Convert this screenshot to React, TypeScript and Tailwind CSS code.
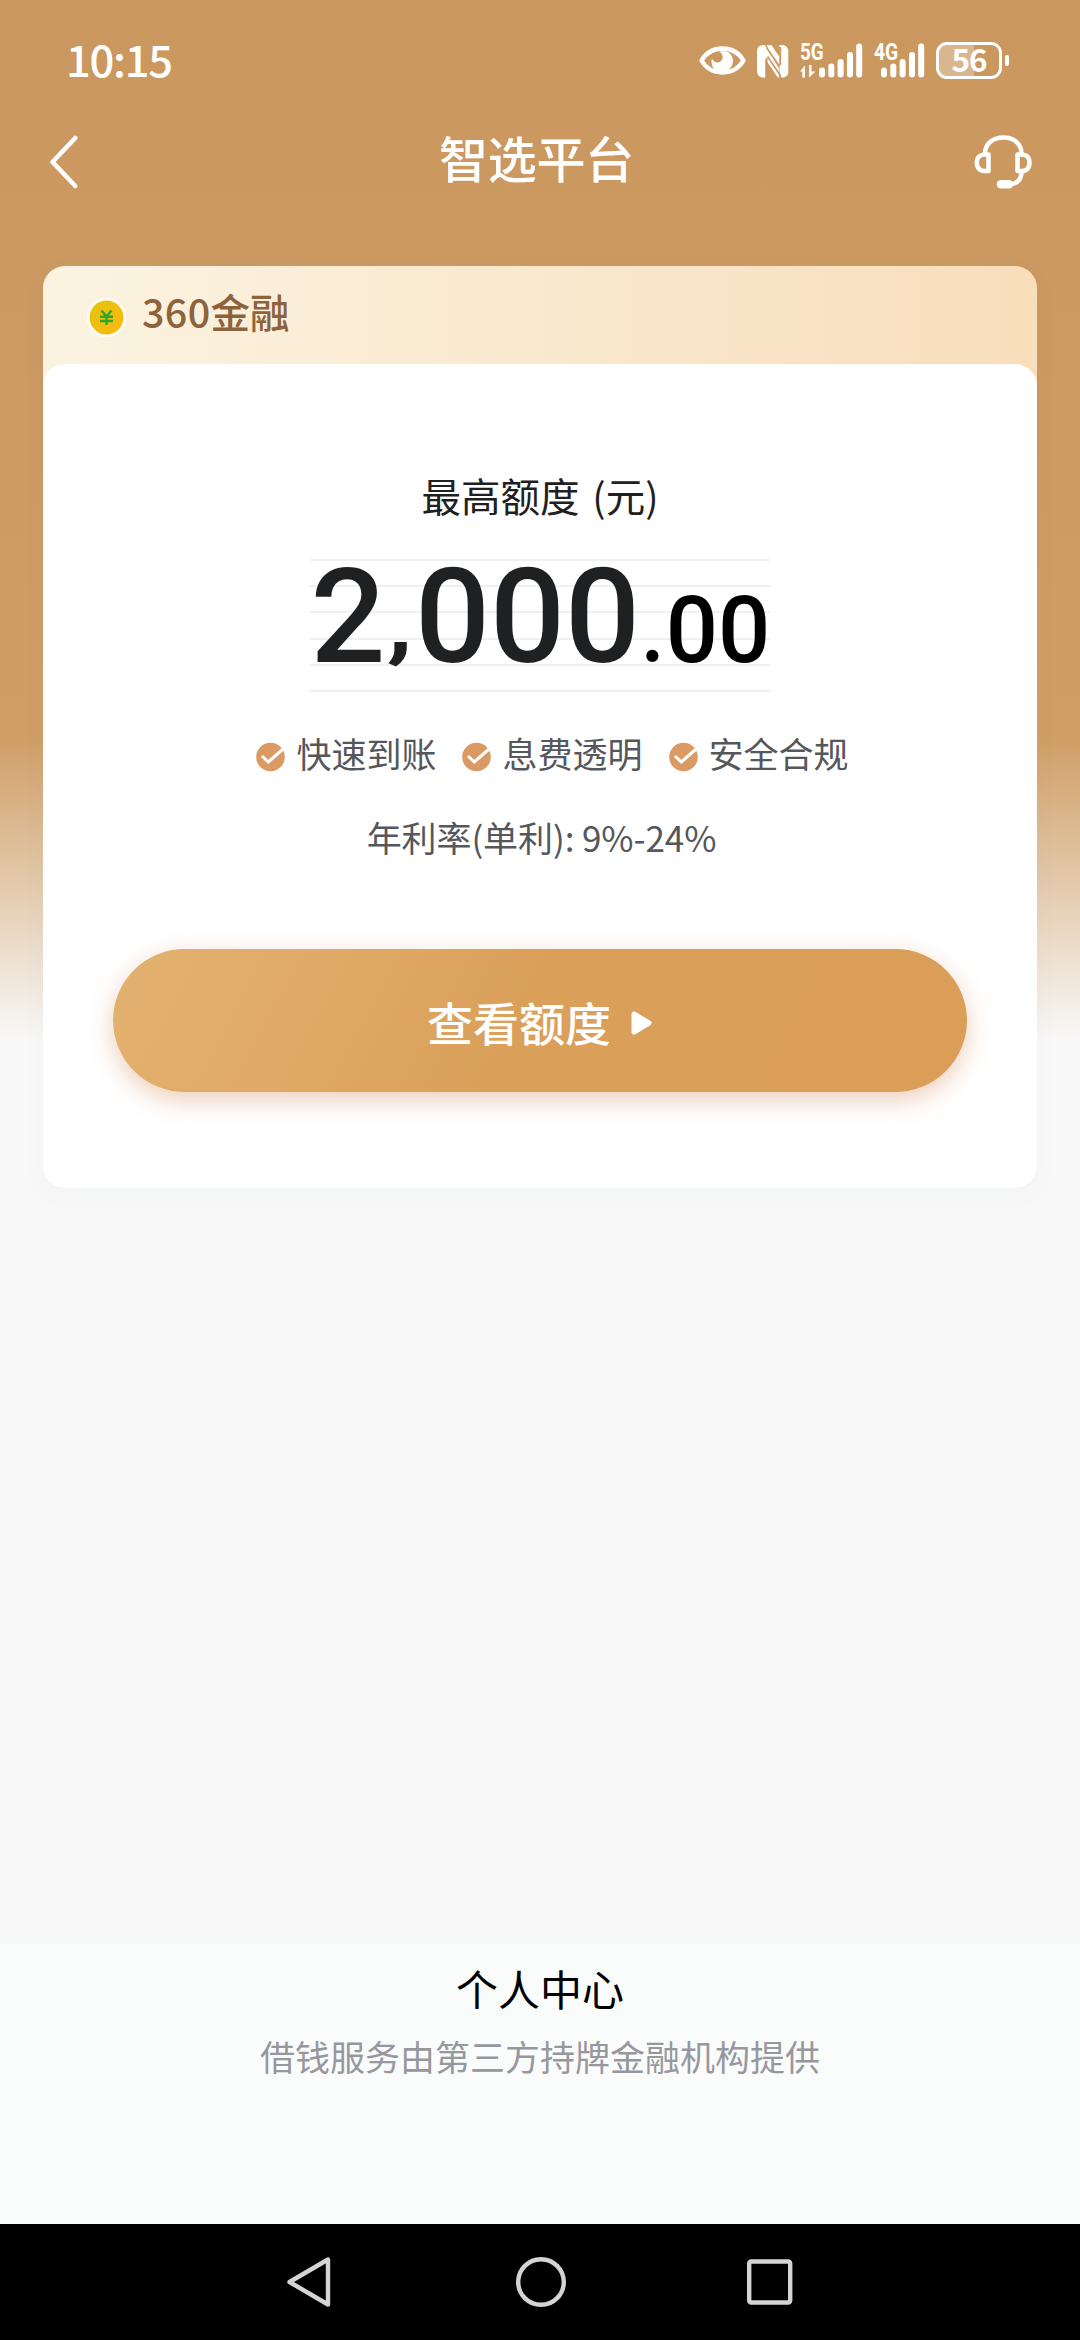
import React from "react";

const benefits = ["快速到账", "息费透明", "安全合规"];

function SignalBars({ className }: { className?: string }) {
  return (
    <svg className={className} width="44" height="36" viewBox="0 0 44 36" fill="#fff">
      <rect x="0" y="24.5" width="6" height="10" rx="3" />
      <rect x="9.3" y="20.5" width="6" height="14" rx="3" />
      <rect x="18.6" y="16" width="6" height="18.5" rx="3" />
      <rect x="28" y="9" width="6" height="25.5" rx="3" />
      <rect x="37.2" y="0.5" width="6" height="34" rx="3" />
    </svg>
  );
}

function StatusBar() {
  return (
    <div className="flex h-[120px] items-start justify-between pl-[66px] pr-[71px] text-white">
      <div className="mt-[29px] text-[43.5px] leading-[60px] font-medium tracking-[-1.3px]">10:15</div>
      <div className="mt-[42px] flex h-[38px] items-start">
        <svg className="mt-[2px]" width="47" height="33" viewBox="0 0 47 33">
          <path d="M2.5 16.5 C12 0.5 35 0.5 44.5 16.5 C35 32.5 12 32.5 2.5 16.5 Z" fill="none" stroke="#fff" strokeWidth="4.4" strokeLinejoin="round" />
          <path d="M20 7.8 C27 5.2 34 9.5 34 17 C34 23 29 28 23 28 C17 28 12.5 24 12.5 17.5 C12.5 16.5 12.7 15.5 13 14.7 C14.5 18 18 19.3 21 17.7 C25 15.5 24.5 9.5 20 7.8 Z" fill="#fff" />
        </svg>
        <svg className="ml-[11px] mt-[3px]" width="32" height="33" viewBox="0 0 32 33">
          <path d="M8 0 L4.5 0.3 C1.5 1 0 3 0 6 V26 C0 30 2.5 32.5 6.5 32.5 H8.3 V14 L20.8 32.5 H22 V23.5 L8 0 Z" fill="#fff" />
          <path d="M9.8 0 H14.5 L22.5 12 V0 H25 C29 0 31.3 2.5 31.3 6.5 V27 C31.3 30.5 29 32.5 24.5 32.5 C22.8 30.5 22.5 29 22.5 22 L12.5 7.5 Z" fill="#fff" />
          <path d="M10.5 11.5 L23.7 31 M9.8 3 L22.5 21.5" stroke="#ca975f" strokeWidth="1.6" />
          <path d="M9.6 13 V30 M23.2 2 V20" stroke="#ca975f" strokeWidth="1.8" />
        </svg>
        <div className="ml-[11px] flex">
          <div className="w-[19px]">
            <div className="origin-left scale-x-[0.82] font-['Roboto'] text-[23px] leading-[22px] font-bold whitespace-nowrap">5G</div>
            <svg width="16" height="13" viewBox="0 0 16 13" className="mt-[1px]" fill="#fff">
              <path d="M5 12.5 V0.5 L0 6.5 H2.3 V12.5 Z M9 0 V12.5 L15.5 6.5 H11.5 V0 Z" />
            </svg>
          </div>
          <SignalBars className="mt-[1px]" />
        </div>
        <div className="relative ml-[11px] flex w-[51px] justify-end">
          <div className="absolute left-0 top-0 origin-left scale-x-[0.84] font-['Roboto'] text-[23px] leading-[22px] font-bold">4G</div>
          <SignalBars className="mt-[1px]" />
        </div>
        <div className="ml-[11px] flex items-center">
          <div className="flex h-[37px] w-[66px] items-start justify-center rounded-[11px] border-[3px] border-white bg-[linear-gradient(90deg,#dab68e_0_58%,transparent_58%)]">
            <span className="mt-[-10px] text-[31.5px] leading-[46px] font-bold tracking-[-1.2px]">56</span>
          </div>
          <div className="ml-[3px] h-[11px] w-[4px] rounded-[2px] bg-white" />
        </div>
      </div>
    </div>
  );
}

function TitleBar() {
  return (
    <div className="flex h-[146px] items-start justify-between pl-[48px] pr-[47px] text-white">
      <svg className="mt-[14px]" width="60" height="56" viewBox="0 0 60 56" fill="none" stroke="#fff" strokeWidth="4.6" strokeLinecap="round" strokeLinejoin="round">
        <path d="M27.3 4 L4.5 28 L27.3 52" />
      </svg>
      <h1 className="mt-[1px] pr-[8px] text-[49px] leading-[72px] font-medium tracking-[-0.2px]">智选平台</h1>
      <svg className="mt-[14px]" width="60" height="56" viewBox="0 0 60 56" fill="none" stroke="#fff" strokeWidth="4.5" strokeLinecap="round" strokeLinejoin="round">
        <path d="M12 20 C12 9.5 20 3.5 30.5 3.5 C41 3.5 48.5 9.5 48.5 20" />
        <path d="M15.5 20.5 V37 H12 C7 37 3.8 34 3.8 28.7 C3.8 23.5 7 20.5 12 20.5 Z" />
        <path d="M44.5 20.5 V37 H48.5 C53.5 37 56.5 34 56.5 28.7 C56.5 23.5 53.5 20.5 48.5 20.5 Z" />
        <path d="M48.5 38 C48.5 46 43 50.3 37 50.3" />
        <path d="M28 50.3 H36" strokeWidth="8.5" />
      </svg>
    </div>
  );
}

function CheckBadge() {
  return (
    <svg className="mt-[7px]" width="29" height="30" viewBox="0 0 29 30">
      <circle cx="14.5" cy="15" r="14.3" fill="#d99a63" />
      <path d="M6 14 L12.3 20 L26.5 7.5" fill="none" stroke="#fff" strokeWidth="3" />
    </svg>
  );
}

function LoanCard() {
  return (
    <section className="mx-[43px] h-[922px] rounded-[22px] bg-[linear-gradient(90deg,#fbf3e1,#f8debb)] shadow-[0_6px_24px_rgba(90,120,170,0.04)]">
      <div className="flex h-[98px] items-start pl-[43px]">
        <svg className="mt-[31px]" width="41" height="41" viewBox="0 0 41 41">
          <defs>
            <linearGradient id="coin" x1="0" y1="0" x2="1" y2="1">
              <stop offset="0" stopColor="#e3c40a" />
              <stop offset="1" stopColor="#fcb814" />
            </linearGradient>
          </defs>
          <circle cx="20.5" cy="20.5" r="19.8" fill="#fffdf3" />
          <circle cx="20.5" cy="20.5" r="17" fill="url(#coin)" />
          <path d="M15.5 13.5 L20.5 19.5 L25.5 13.5 M14 19.7 H27 M14 24 H27 M20.5 19.5 V28" fill="none" stroke="#2fa62c" strokeWidth="2.4" />
        </svg>
        <h2 className="ml-[15px] mt-[17px] text-[39.5px] leading-[56px] font-medium text-[#8d633c]">
          <span className="tracking-[0.3px]">360</span>金融
        </h2>
      </div>
      <div className="flex h-[824px] flex-col items-center rounded-[22px] bg-white">
        <div className="mt-[103px] text-[39.5px] leading-[56px] text-[#1f2021] [word-spacing:4px]">最高额度 (元)</div>
        <div className="relative mt-[36px] h-[133px] w-[460px]">
          <div className="flex flex-col gap-[24.2px]">
            {[0, 1, 2, 3, 4, 5].map((n) => (
              <div key={n} className="h-[2px] shrink-0 bg-[#f0f0f0]" />
            ))}
          </div>
          <div className="absolute left-[0.4px] top-0 flex items-baseline whitespace-nowrap font-['Roboto'] font-medium leading-[117px]">
            <span className="flex text-[132px] text-[#1f2021]">
              2<span className="origin-[50%_76%] translate-y-[-5px] scale-x-[0.9] scale-y-[0.68]">,</span>000
            </span>
            <span className="ml-[1.5px] mr-[2.5px] translate-y-[-1px] font-['Lato'] text-[92px] leading-[60px] text-black">.</span>
            <span className="text-[92px] text-black">00</span>
          </div>
        </div>
        <div className="mt-[36px] flex gap-[26px] pl-[25px] text-[35px] leading-[50px] text-[#55575c]">
          {benefits.map((b) => (
            <div key={b} className="flex items-center gap-[11px]">
              <CheckBadge />
              <span>{b}</span>
            </div>
          ))}
        </div>
        <div className="mt-[34px] pl-[3px] text-[35px] leading-[50px] tracking-[-0.1px] text-[#55575c]">年利率(单利): 9%-24%</div>
        <button className="mt-[87px] flex h-[143px] w-[854px] items-center justify-center rounded-full bg-[linear-gradient(118deg,#e3b270_0%,#e1aa68_22%,#daa05a_48%,#da9e58_100%)] text-white shadow-[0_8px_24px_rgba(205,120,65,0.36)]">
          <span className="text-[46px] leading-[66px] font-medium">查看额度</span>
          <svg className="ml-[20px] mt-[5px]" width="22" height="26" viewBox="0 0 22 26">
            <path d="M3 4 L18 13 L3 22 Z" fill="#fff" stroke="#fff" strokeWidth="5" strokeLinejoin="round" />
          </svg>
        </button>
      </div>
    </section>
  );
}

function NavBar() {
  return (
    <nav className="flex h-[116px] items-center justify-between bg-black pl-[284px] pr-[283px]">
      <svg width="50" height="54" viewBox="0 0 50 54" fill="none" stroke="#d4d4d4" strokeWidth="4.4" strokeLinejoin="round">
        <path d="M44 4.5 V49.5 L5.5 27 Z" />
      </svg>
      <svg width="54" height="54" viewBox="0 0 54 54" fill="none" stroke="#d4d4d4" strokeWidth="4.4">
        <circle cx="27" cy="27" r="22.8" />
      </svg>
      <svg width="50" height="54" viewBox="0 0 50 54" fill="none" stroke="#d4d4d4" strokeWidth="4.4">
        <rect x="2.2" y="6.5" width="41" height="41" rx="2" />
      </svg>
    </nav>
  );
}

export default function App() {
  return (
    <div className="flex h-[2340px] w-[1080px] flex-col overflow-hidden bg-[#f8f8f8] font-['Noto_Sans_CJK_SC',sans-serif]">
      <main className="flex-1 bg-[linear-gradient(180deg,#ca975f_0px,#cd9b63_500px,#d09f66_740px,#f8f8f8_1040px)]">
        <StatusBar />
        <TitleBar />
        <LoanCard />
      </main>
      <footer className="flex h-[280px] flex-col items-center bg-[#fafcfb]">
        <a className="mt-[14px] text-[42px] leading-[60px] text-black">个人中心</a>
        <p className="mt-[13px] text-[35px] leading-[50px] text-[#97989e]">借钱服务由第三方持牌金融机构提供</p>
      </footer>
      <NavBar />
    </div>
  );
}
